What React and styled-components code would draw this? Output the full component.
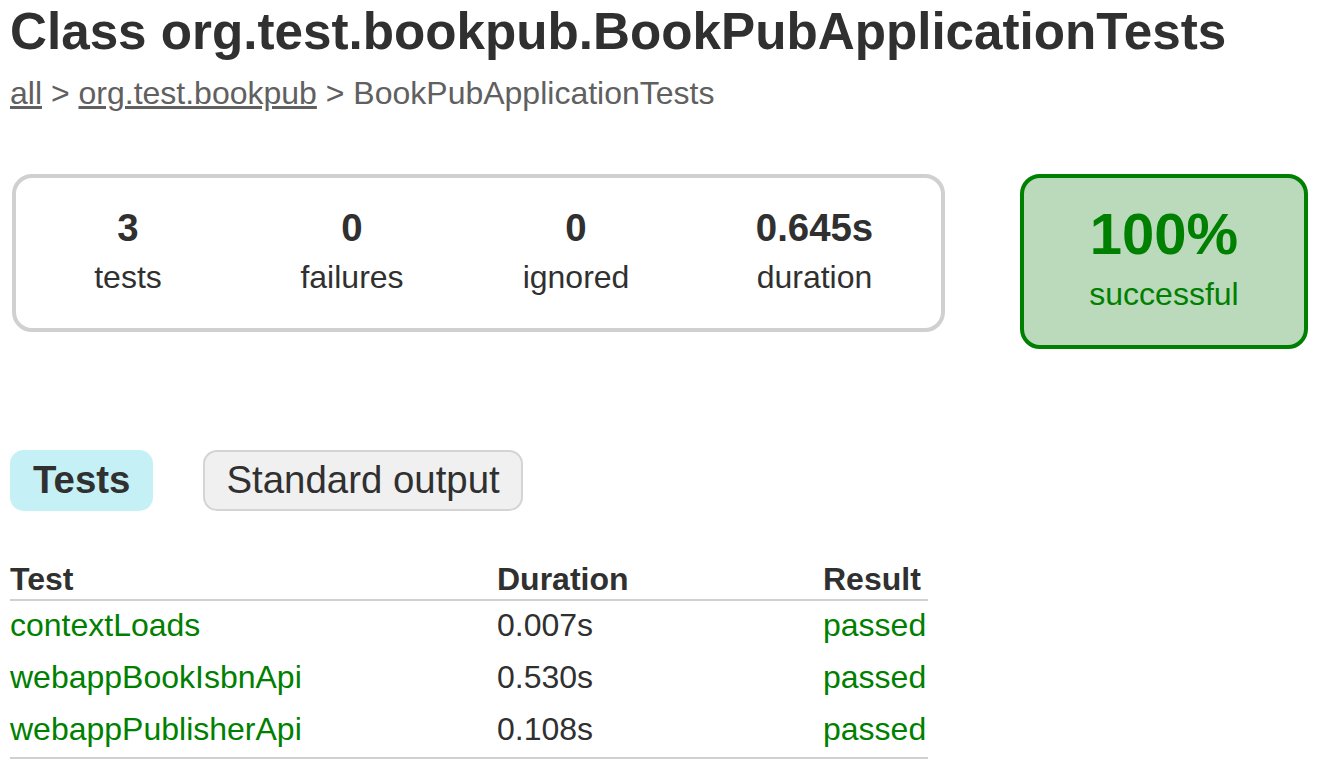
import React from "react";
import styled, { createGlobalStyle } from "styled-components";

const GlobalStyle = createGlobalStyle`
  html, body {
    margin: 0;
    padding: 0;
    background: #ffffff;
  }
  body {
    font-family: "Liberation Sans", Arial, Helvetica, sans-serif;
    font-size: 32px;
    color: #303030;
  }
`;

const Page = styled.div`
  padding: 2px 10px 0 10px;
`;

const Title = styled.h1`
  margin: 0;
  font-size: 51.2px;
  font-weight: bold;
  color: #303030;
`;

const Breadcrumbs = styled.div`
  margin-top: 14px;
  color: #606060;

  a {
    color: #606060;
    text-decoration: underline;
  }
`;

const SummaryRow = styled.div`
  display: flex;
  align-items: flex-start;
  margin-top: 62px;
`;

const SummaryGroup = styled.div`
  display: flex;
  margin-left: 2px;
  width: 925px;
  border: solid 4px #d0d0d0;
  border-radius: 20px;
`;

const InfoBox = styled.div`
  width: ${(p) => p.$width}px;
  padding: 28px 0 32px;
  text-align: center;

  p {
    margin: 0;
  }
`;

const Counter = styled.p`
  font-size: 38.4px;
  font-weight: bold;
  margin-bottom: 9px !important;
`;

const SuccessRate = styled.div`
  margin-left: 75px;
  width: 280px;
  padding: 22px 0 32px;
  text-align: center;
  border: solid 4px #008000;
  border-radius: 20px;
  background-color: #bbd9bb;
  color: #008000;

  p {
    margin: 0;
  }
`;

const Percent = styled.p`
  font-size: 58px;
  font-weight: bold;
  margin-bottom: 9px !important;
`;

const TabLinks = styled.ul`
  display: flex;
  gap: 50px;
  list-style: none;
  margin: 101px 0 0 0;
  padding: 0;
`;

const Tab = styled.li`
  padding: 6px 21px 7px;
  border: solid 2px ${(p) => (p.$selected ? "#c5f0f5" : "#d4d4d4")};
  border-radius: 14px;
  background-color: ${(p) => (p.$selected ? "#c5f0f5" : "#f0f0f0")};

  a {
    display: block;
    font-size: 38.4px;
    text-decoration: none;
    color: #303030;
    font-weight: ${(p) => (p.$selected ? "bold" : "normal")};
  }
`;

const TestTable = styled.table`
  margin-top: 50px;
  border-spacing: 0;
  border-collapse: collapse;
  table-layout: fixed;
  width: 918px;
  border-bottom: solid 2px #d0d0d0;
`;

const Th = styled.th`
  width: ${(p) => p.$width}px;
  padding: 0 0 1px 0;
  font-weight: bold;
  text-align: left;
  border-bottom: solid 2px #d0d0d0;
`;

const Td = styled.td`
  padding: 6px 0 9px 0;
  white-space: nowrap;
  color: ${(p) => (p.$success ? "#008000" : "#303030")};
`;

const tests = [
  { name: "contextLoads", duration: "0.007s", result: "passed" },
  { name: "webappBookIsbnApi", duration: "0.530s", result: "passed" },
  { name: "webappPublisherApi", duration: "0.108s", result: "passed" },
];

const summary = [
  { value: "3", label: "tests", width: 224 },
  { value: "0", label: "failures", width: 224 },
  { value: "0", label: "ignored", width: 224 },
  { value: "0.645s", label: "duration", width: 253 },
];

const App = () => {
  return (
    <Page>
      <GlobalStyle />
      <Title>Class org.test.bookpub.BookPubApplicationTests</Title>
      <Breadcrumbs>
        <a href="#all">all</a> &gt; <a href="#pkg">org.test.bookpub</a> &gt;
        BookPubApplicationTests
      </Breadcrumbs>
      <SummaryRow>
        <SummaryGroup>
          {summary.map((s) => (
            <InfoBox key={s.label} $width={s.width}>
              <Counter>{s.value}</Counter>
              <p>{s.label}</p>
            </InfoBox>
          ))}
        </SummaryGroup>
        <SuccessRate>
          <Percent>100%</Percent>
          <p>successful</p>
        </SuccessRate>
      </SummaryRow>
      <TabLinks>
        <Tab $selected>
          <a href="#tab0">Tests</a>
        </Tab>
        <Tab>
          <a href="#tab1">Standard output</a>
        </Tab>
      </TabLinks>
      <TestTable>
        <thead>
          <tr>
            <Th $width={487}>Test</Th>
            <Th $width={326}>Duration</Th>
            <Th $width={105}>Result</Th>
          </tr>
        </thead>
        <tbody>
          {tests.map((t) => (
            <tr key={t.name}>
              <Td $success>{t.name}</Td>
              <Td>{t.duration}</Td>
              <Td $success>{t.result}</Td>
            </tr>
          ))}
        </tbody>
      </TestTable>
    </Page>
  );
};

export default App;
